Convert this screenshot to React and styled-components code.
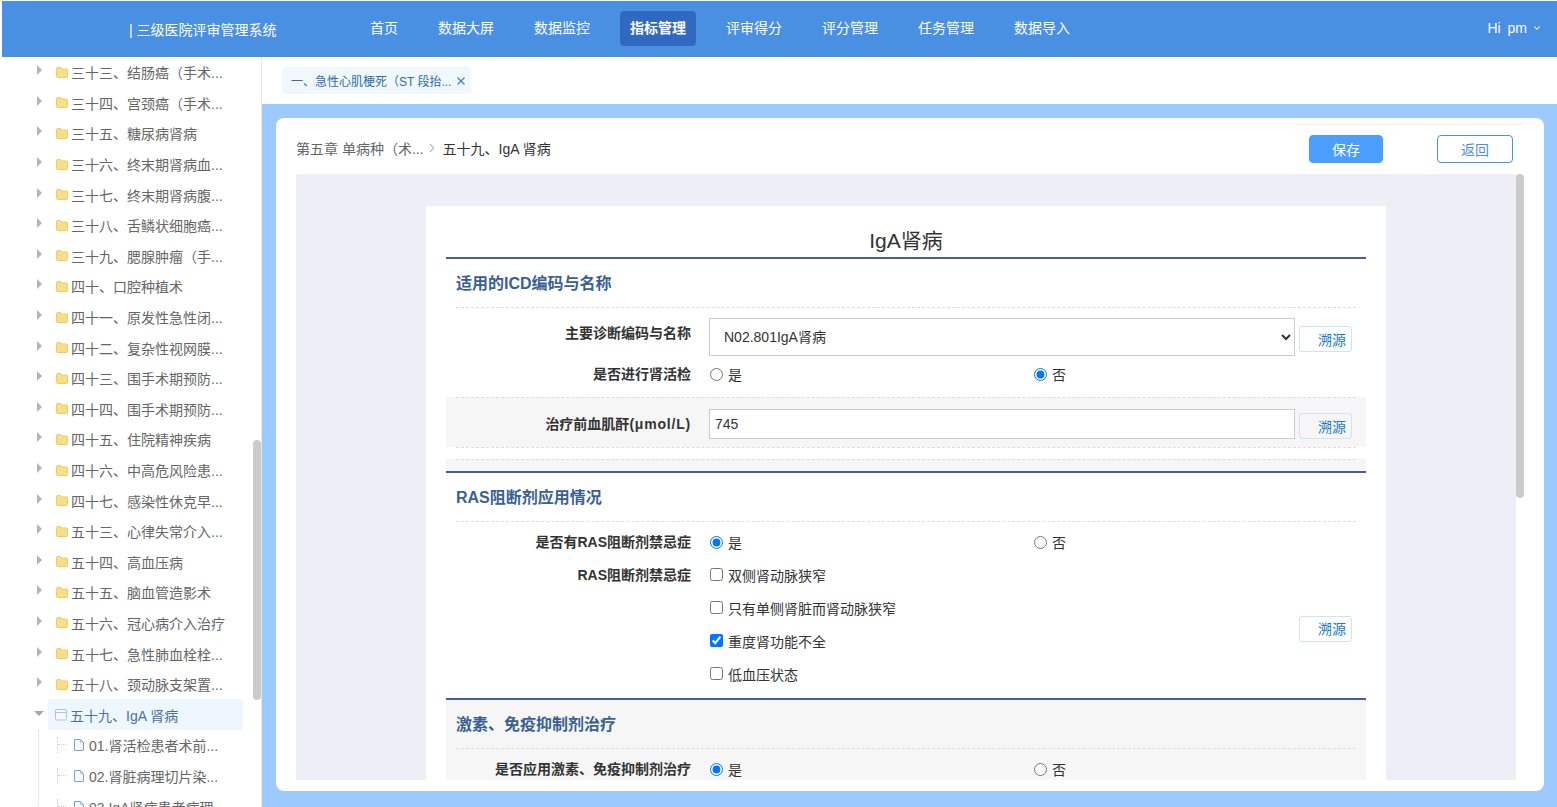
import React from 'react';
import styled, { createGlobalStyle } from 'styled-components';
import { ChevronDown, ChevronRight, X } from 'lucide-react';

const GlobalStyle = createGlobalStyle`
  html, body {
    margin: 0;
    padding: 0;
    background: #fff;
    font-family: "Liberation Sans", "Noto Sans CJK SC", sans-serif;
  }
  * {
    box-sizing: border-box;
  }
`;

const Page = styled.div`
  width: 100vw;
  height: 100vh;
  display: flex;
  flex-direction: column;
  overflow: hidden;
`;

const Header = styled.header`
  flex: none;
  height: 56px;
  margin: 1px 0 0 2px;
  background: #4a90e2;
  color: #fff;
  font-size: 14px;
  display: flex;
  align-items: center;
`;

const Brand = styled.div`
  width: 358px;
  padding-left: 127px;
  white-space: pre;
`;

const Nav = styled.nav`
  display: flex;
  align-items: center;
  gap: 20px;
  flex: 1;
`;

const NavItem = styled.div`
  height: 35px;
  line-height: 35px;
  padding: 0 10px;
  border-radius: 4px;
  margin-top: -2px;
  font-weight: ${(p) => (p.$active ? 700 : 400)};
  background: ${(p) => (p.$active ? '#3269c0' : 'transparent')};
`;

const User = styled.div`
  display: flex;
  align-items: center;
  gap: 5px;
  margin: -2px 15px 0 0;
  word-spacing: 3px;
  font-size: 14px;
`;

const Body = styled.div`
  flex: 1;
  min-height: 0;
  display: flex;
`;

const Sidebar = styled.aside`
  position: relative;
  flex: none;
  width: 262px;
  border-right: 1px solid #e6e6e6;
  overflow: hidden;
`;

const ScrollThumb = styled.div`
  position: absolute;
  top: ${(p) => p.$top}px;
  right: 0;
  width: 8px;
  height: ${(p) => p.$height}px;
  border-radius: 4px;
  background: #cccaca;
`;

const TreeRow = styled.div`
  height: 30.6px;
  display: flex;
  align-items: center;
  padding-left: ${(p) => (p.$open ? '34px' : '37px')};
  font-size: 14px;
  color: #666;
  white-space: nowrap;
`;

const Arrow = styled.span`
  flex: none;
  width: ${(p) => (p.$open ? '14px' : '11px')};
  height: 0;
  margin-top: -4px;
  &::before {
    content: '';
    display: block;
    width: 0;
    height: 0;
    border-style: solid;
    border-color: transparent;
    ${(p) =>
      p.$open
        ? 'border-width: 5px 5px 0 5px; border-top-color: #a8a8a8; margin-top: -2px;'
        : 'border-width: 5px 0 5px 5px; border-left-color: #b4b4b4; margin-top: -5px;'}
  }
`;

const NodeLabel = styled.div`
  width: 195px;
  height: 100%;
  display: flex;
  align-items: center;
  gap: 3px;
  padding-left: ${(p) => (p.$selected ? '7px' : '8px')};
  background: ${(p) => (p.$selected ? '#eef7ff' : 'transparent')};
  color: ${(p) => (p.$selected ? '#4f6fa3' : 'inherit')};
`;

const ChildList = styled.div`
  margin-left: 38px;
  border-left: 1px dotted #d2d2d2;
`;

const ChildRow = styled.div`
  height: 30.6px;
  display: flex;
  align-items: center;
  padding-left: 18px;
  font-size: 14px;
  color: #666;
  white-space: nowrap;
`;

const Connector = styled.span`
  position: relative;
  flex: none;
  width: 8px;
  height: 16px;
  margin-right: 9px;
  border-left: 1px dotted #d2d2d2;
  &::after {
    content: '';
    position: absolute;
    left: 0;
    top: 7px;
    width: 8px;
    border-top: 1px dotted #d2d2d2;
  }
`;

const ChildName = styled.span`
  margin-left: 5px;
`;

const Main = styled.main`
  flex: 1;
  min-width: 0;
  display: flex;
  flex-direction: column;
`;

const TabBar = styled.div`
  flex: none;
  height: 47px;
  padding: 10px 0 0 20px;
  background: #fff;
`;

const Tab = styled.div`
  width: 189px;
  height: 27px;
  display: flex;
  align-items: center;
  gap: 4px;
  padding-left: 9px;
  border-radius: 4px;
  background: #f0f7fd;
  color: #2f6ea8;
  font-size: 12px;
  white-space: nowrap;
  svg {
    color: #5688c4;
  }
`;

const Content = styled.div`
  flex: 1;
  min-height: 0;
  display: flex;
  padding: 14px 13px 16px 14px;
  background: #9ccaff;
`;

const Card = styled.div`
  flex: 1;
  min-width: 0;
  display: flex;
  flex-direction: column;
  padding: 0 20px 11px;
  border-radius: 8px;
  background: #fff;
`;

const Toolbar = styled.div`
  flex: none;
  height: 56px;
  display: flex;
  justify-content: space-between;
`;

const Breadcrumb = styled.div`
  display: flex;
  align-items: center;
  height: 100%;
  padding-top: 4px;
  font-size: 14px;
  color: #333;
  white-space: nowrap;
`;

const CrumbParent = styled.span`
  color: #666;
`;

const CrumbSep = styled.span`
  display: flex;
  width: 22px;
  margin-left: -3px;
  justify-content: center;
  color: #bbb;
`;

const Actions = styled.div`
  display: flex;
  align-items: flex-start;
  gap: 54px;
  margin-top: 6px;
  padding: 10px 11px 0 12px;
  border-top: 1px solid #f3f3f3;
`;

const ActionButton = styled.button`
  width: ${(p) => (p.$primary ? '74px' : '76px')};
  height: 28px;
  padding: 0;
  border-radius: 4px;
  border: 1px solid ${(p) => (p.$primary ? '#4a9eff' : '#4a90e2')};
  background: ${(p) => (p.$primary ? '#4a9eff' : '#fff')};
  color: ${(p) => (p.$primary ? '#fff' : '#4a90e2')};
  font: inherit;
  font-size: 14px;
`;

const DocArea = styled.div`
  position: relative;
  flex: 1;
  min-height: 0;
  padding-right: 8px;
  overflow: hidden;
`;

const DocCanvas = styled.div`
  height: 100%;
  background: #edeef6;
  overflow: hidden;
`;

const Paper = styled.div`
  width: 960px;
  margin: 32px auto 0;
  padding: 0 20px;
  background: #fff;
`;

const Title = styled.h1`
  margin: 0;
  height: 51px;
  padding-top: 20px;
  font-size: 21px;
  line-height: 30px;
  font-weight: 400;
  text-align: center;
  color: #333;
`;

const Section = styled.section`
  border-top: 2px solid #456090;
  background: ${(p) => (p.$shaded ? '#f6f6f6' : 'transparent')};
`;

const SectionTitle = styled.h2`
  margin: 0 10px;
  height: 49px;
  border-bottom: 1px dashed #ddd;
  font-size: 16px;
  line-height: 50px;
  font-weight: 700;
  color: #3a5f95;
`;

const Band = styled.div`
  height: ${(p) => p.$height}px;
  background: #f6f6f6;
`;

const Divider = styled.div`
  margin: 0 10px;
  border-top: 1px dashed #ddd;
`;

const Spacer = styled.div`
  height: ${(p) => p.$height}px;
`;

const Row = styled.div`
  display: grid;
  grid-template-columns: 253px 586px 57px;
  margin: 0 10px;
  padding: ${(p) => p.$padding};
`;

const Label = styled.label`
  padding-right: 18px;
  padding-top: ${(p) => p.$top || 0}px;
  font-size: 14px;
  font-weight: 700;
  line-height: ${(p) => p.$line || 26}px;
  text-align: right;
  color: #333;
`;

const Unit = styled.span`
  letter-spacing: 0.8px;
`;

const Select = styled.select`
  width: 100%;
  height: 38px;
  padding: 0 10px;
  border: 1px solid #ccc;
  border-radius: 0;
  background: #fff;
  font: inherit;
  font-size: 14px;
  color: #333;
`;

const TextInput = styled.input`
  width: 100%;
  height: 30px;
  padding: 0 5px;
  border: 1px solid #ccc;
  background: #fff;
  font: inherit;
  font-size: 14px;
  color: #333;
`;

const RadioGroup = styled.div`
  display: grid;
  grid-template-columns: 324px 1fr;
  height: 26px;
`;

const Option = styled.label`
  display: flex;
  align-items: center;
  gap: 5px;
  height: ${(p) => p.$height || 26}px;
  font-size: 14px;
  color: #333;
  input {
    width: 13px;
    height: 13px;
    margin: 0 0 0 1px;
    flex: none;
  }
`;

const CheckList = styled.div`
  padding-bottom: 8px;
`;

const TraceCell = styled.div`
  padding-left: 4px;
  margin-top: ${(p) => p.$offset || 0}px;
  align-self: ${(p) => (p.$center ? 'center' : 'start')};
`;

const TraceButton = styled.button`
  display: block;
  width: 53px;
  height: 26px;
  padding: 0 5px 1px 0;
  border: 1px solid #cfe3f5;
  border-radius: 3px;
  background: ${(p) => (p.$shaded ? '#f6f6f6' : '#fff')};
  color: #1a7ac7;
  font: inherit;
  font-size: 14px;
  text-align: right;
`;

const FolderIcon = ({ open }) =>
  open ? (
    <svg width="12" height="12" viewBox="0 0 12 12">
      <path d="M.5 2 a1.5 1.5 0 0 1 1.5-1.5 h8 a1.5 1.5 0 0 1 1.5 1.5 v7.5 a1.5 1.5 0 0 1-1.5 1.5 h-8 a1.5 1.5 0 0 1-1.5-1.5z" fill="#f6f9fe" stroke="#b3c2dc" />
      <path d="M.5 3.5 h11" stroke="#b3c2dc" />
    </svg>
  ) : (
    <svg width="12" height="11" viewBox="0 0 12 11">
      <path d="M.5 1.5 a1 1 0 0 1 1-1 h3 l1 1.5 h5 a1 1 0 0 1 1 1 v6.5 a1 1 0 0 1-1 1 h-9 a1 1 0 0 1-1-1z" fill="#f8de88" stroke="#eecb63" />
    </svg>
  );

const FileIcon = () => (
  <svg width="10" height="12" viewBox="0 0 10 12">
    <path d="M.5 1 a.5.5 0 0 1 .5-.5 h5.5 l3 3 v7.5 a.5.5 0 0 1-.5.5 h-8 a.5.5 0 0 1-.5-.5z" fill="#f5f8fd" stroke="#8c9cc0" />
    <path d="M6.5.5 v3 h3" fill="none" stroke="#b5c1da" />
  </svg>
);

const navItems = ['首页', '数据大屏', '数据监控', '指标管理', '评审得分', '评分管理', '任务管理', '数据导入'];

const treeItems = [
  '三十三、结肠癌（手术...',
  '三十四、宫颈癌（手术...',
  '三十五、糖尿病肾病',
  '三十六、终末期肾病血...',
  '三十七、终末期肾病腹...',
  '三十八、舌鳞状细胞癌...',
  '三十九、腮腺肿瘤（手...',
  '四十、口腔种植术',
  '四十一、原发性急性闭...',
  '四十二、复杂性视网膜...',
  '四十三、围手术期预防...',
  '四十四、围手术期预防...',
  '四十五、住院精神疾病',
  '四十六、中高危风险患...',
  '四十七、感染性休克早...',
  '五十三、心律失常介入...',
  '五十四、高血压病',
  '五十五、脑血管造影术',
  '五十六、冠心病介入治疗',
  '五十七、急性肺血栓栓...',
  '五十八、颈动脉支架置...',
];

const childItems = ['01.肾活检患者术前...', '02.肾脏病理切片染...', '03.IgA肾病患者病理...'];

const checks = [
  { text: '双侧肾动脉狭窄', checked: false },
  { text: '只有单侧肾脏而肾动脉狭窄', checked: false },
  { text: '重度肾功能不全', checked: true },
  { text: '低血压状态', checked: false },
];

function YesNo({ name, yes }) {
  return (
    <RadioGroup>
      <Option>
        <input type="radio" name={name} defaultChecked={yes} />是
      </Option>
      <Option>
        <input type="radio" name={name} defaultChecked={!yes} />否
      </Option>
    </RadioGroup>
  );
}

function App() {
  return (
    <>
      <GlobalStyle />
      <Page>
        <Header>
          <Brand>| 三级医院评审管理系统</Brand>
          <Nav>
            {navItems.map((item) => (
              <NavItem key={item} $active={item === '指标管理'}>
                {item}
              </NavItem>
            ))}
          </Nav>
          <User>
            Hi pm
            <ChevronDown size={10} strokeWidth={2.5} />
          </User>
        </Header>
        <Body>
          <Sidebar>
            {treeItems.map((item) => (
              <TreeRow key={item}>
                <Arrow />
                <NodeLabel>
                  <FolderIcon />
                  {item}
                </NodeLabel>
              </TreeRow>
            ))}
            <TreeRow $open>
              <Arrow $open />
              <NodeLabel $selected>
                <FolderIcon open />
                五十九、IgA 肾病
              </NodeLabel>
            </TreeRow>
            <ChildList>
              {childItems.map((item) => (
                <ChildRow key={item}>
                  <Connector />
                  <FileIcon />
                  <ChildName>{item}</ChildName>
                </ChildRow>
              ))}
            </ChildList>
            <ScrollThumb $top={383} $height={260} />
          </Sidebar>
          <Main>
            <TabBar>
              <Tab>
                一、急性心肌梗死（ST 段抬...
                <X size={12} strokeWidth={3} />
              </Tab>
            </TabBar>
            <Content>
              <Card>
                <Toolbar>
                  <Breadcrumb>
                    <CrumbParent>第五章 单病种（术...</CrumbParent>
                    <CrumbSep>
                      <ChevronRight size={14} />
                    </CrumbSep>
                    五十九、IgA 肾病
                  </Breadcrumb>
                  <Actions>
                    <ActionButton $primary>保存</ActionButton>
                    <ActionButton>返回</ActionButton>
                  </Actions>
                </Toolbar>
                <DocArea>
                  <DocCanvas>
                    <Paper>
                      <Title>IgA肾病</Title>
                      <Section>
                        <SectionTitle>适用的ICD编码与名称</SectionTitle>
                        <Row $padding="10px 0 5px">
                          <Label $top={2}>主要诊断编码与名称</Label>
                          <Select defaultValue="N02.801">
                            <option value="N02.801">N02.801IgA肾病</option>
                          </Select>
                          <TraceCell $offset={8}>
                            <TraceButton>溯源</TraceButton>
                          </TraceCell>
                        </Row>
                        <Row $padding="0 0 10px">
                          <Label>是否进行肾活检</Label>
                          <YesNo name="biopsy" yes={false} />
                        </Row>
                        <Band $height={50}>
                          <Divider />
                          <Row $padding="11px 0 0">
                            <Label $line={30}>
                              治疗前血肌酐<Unit>(μmol/L)</Unit>
                            </Label>
                            <TextInput defaultValue="745" />
                            <TraceCell $offset={4}>
                              <TraceButton $shaded>溯源</TraceButton>
                            </TraceCell>
                          </Row>
                        </Band>
                        <Divider />
                        <Spacer $height={11} />
                        <Band $height={12}>
                          <Divider />
                        </Band>
                      </Section>
                      <Section>
                        <SectionTitle>RAS阻断剂应用情况</SectionTitle>
                        <Row $padding="7px 0 0">
                          <Label>是否有RAS阻断剂禁忌症</Label>
                          <YesNo name="ras" yes />
                        </Row>
                        <Row $padding="3px 0 0">
                          <Label $top={1} $line={33}>RAS阻断剂禁忌症</Label>
                          <CheckList>
                            {checks.map((c) => (
                              <Option key={c.text} $height={33}>
                                <input type="checkbox" defaultChecked={c.checked} />
                                {c.text}
                              </Option>
                            ))}
                          </CheckList>
                          <TraceCell $center $offset={1}>
                            <TraceButton>溯源</TraceButton>
                          </TraceCell>
                        </Row>
                      </Section>
                      <Section $shaded>
                        <SectionTitle>激素、免疫抑制剂治疗</SectionTitle>
                        <Row $padding="7px 0 7px">
                          <Label>是否应用激素、免疫抑制剂治疗</Label>
                          <YesNo name="hormone" yes />
                        </Row>
                      </Section>
                    </Paper>
                  </DocCanvas>
                  <ScrollThumb $top={0} $height={324} />
                </DocArea>
              </Card>
            </Content>
          </Main>
        </Body>
      </Page>
    </>
  );
}

export default App;
